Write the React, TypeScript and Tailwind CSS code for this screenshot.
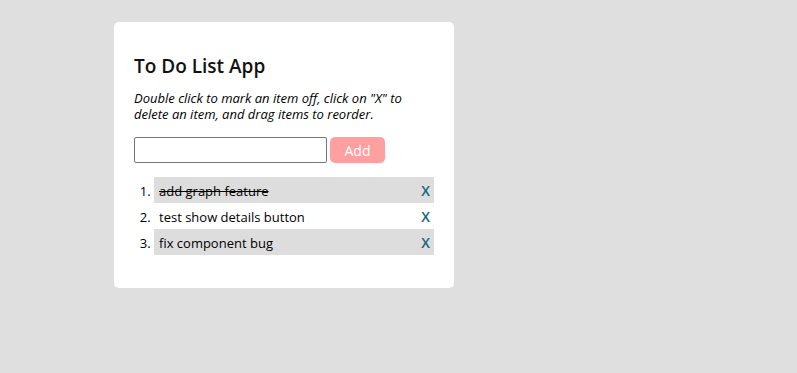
import { useState } from "react";

const INITIAL = [
  { id: 1, text: "add graph feature", done: true },
  { id: 2, text: "test show details button", done: false },
  { id: 3, text: "fix component bug", done: false },
];

export default function App() {
  const [items, setItems] = useState(INITIAL);
  const [value, setValue] = useState("");

  const addItem = () => {
    if (!value.trim()) return;
    setItems([...items, { id: Date.now(), text: value.trim(), done: false }]);
    setValue("");
  };

  return (
    <div
      className="min-h-[373px] w-full bg-[#dfdfdf] pt-[22px] pl-[114px]"
      style={{ fontFamily: '"Open Sans", sans-serif' }}
    >
      <div className="w-[340px] rounded-[5px] bg-white px-5 pt-[32px] pb-[33px]">
        <h1 className="text-[19px] font-semibold leading-[24px] text-[#111]">To Do List App</h1>
        <p className="mt-[12px] text-[13px] italic leading-[16px] text-black">
          Double click to mark an item off, click on "X" to delete an item, and drag items to reorder.
        </p>

        <div className="mt-[15px] flex items-center gap-[3px]">
          <input
            value={value}
            onChange={(e) => setValue(e.target.value)}
            className="h-[26px] w-[193px] rounded-[2px] border border-[#767676] px-1 text-[13px] outline-none"
          />
          <button
            onClick={addItem}
            className="h-[26px] w-[55px] rounded-[5px] bg-[#ffa0a0] text-[14px] text-white"
          >
            Add
          </button>
        </div>

        <ol className="mt-[14px] list-decimal pl-[20px] text-[13px] text-black">
          {items.map((item, i) => (
            <li
              key={item.id}
              onDoubleClick={() =>
                setItems(items.map((it) => (it.id === item.id ? { ...it, done: !it.done } : it)))
              }
              className="leading-[26px]"
            >
              <div
                className={`flex h-[26px] items-center justify-between pt-[1px] pl-[5px] pr-[4px] ${
                  i % 2 === 0 ? "bg-[#dddddd]" : "bg-white"
                }`}
              >
                <span className={item.done ? "line-through" : ""}>{item.text}</span>
                <button
                  onClick={() => setItems(items.filter((it) => it.id !== item.id))}
                  className="text-[14px] font-semibold text-[#19667a]"
                >
                  X
                </button>
              </div>
            </li>
          ))}
        </ol>
      </div>
    </div>
  );
}
